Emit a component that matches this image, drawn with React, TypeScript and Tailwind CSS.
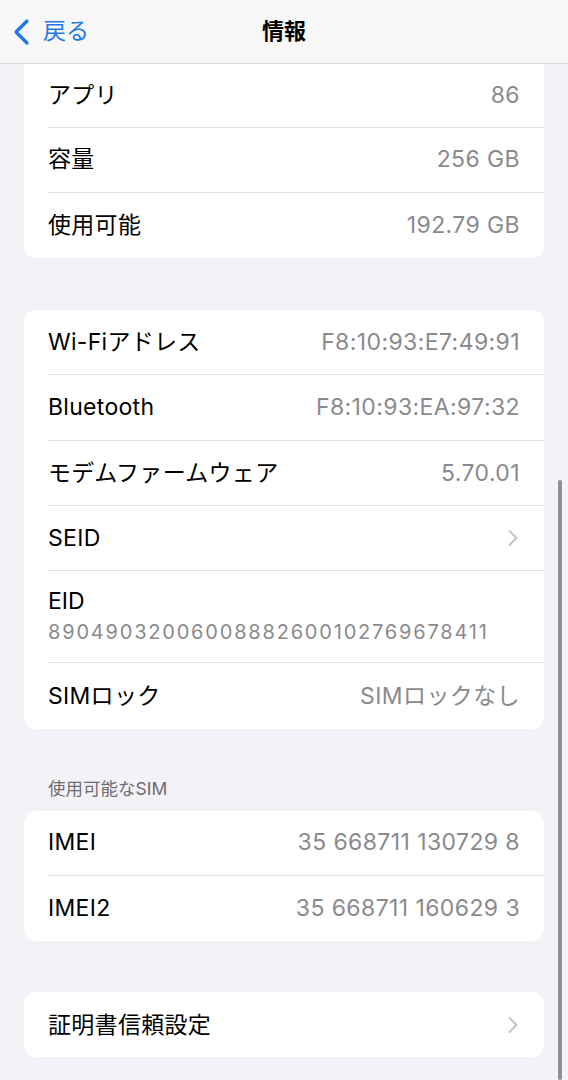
import { ChevronRight } from "lucide-react";

type Item = {
  label: string;
  value?: string;
  chevron?: boolean;
  sub?: string;
};

const font = { fontFamily: '"Inter", "Noto Sans CJK JP", sans-serif' };

const Row = ({ item, last, first }: { item: Item; last?: boolean; first?: boolean }) => {
  if (item.sub) {
    return (
      <div className="pl-6">
        <div className={`flex h-[92px] flex-col justify-center pr-6 ${last ? "" : "border-b border-[#e2e2e5]"}`}>
          <span className="text-[23px] leading-[31px] text-black">{item.label}</span>
          <span className="text-[20px] leading-[30px] tracking-[1.8px] text-[#8a8a8e]">{item.sub}</span>
        </div>
      </div>
    );
  }
  return (
    <div className="pl-6">
      <div
        className={`flex items-center justify-between pr-6 ${first ? "h-[63.5px]" : "h-[65.3px]"} ${
          last ? "" : "border-b border-[#e2e2e5]"
        }`}
      >
        <span className="text-[23px] tracking-[0.3px] text-black">{item.label}</span>
        {item.value && <span className="text-[23px] tracking-[0.4px] text-[#8a8a8e]">{item.value}</span>}
        {item.chevron && <ChevronRight className="mr-[-7px] h-[28px] w-[28px] text-[#c4c4c7]" strokeWidth={1.7} />}
      </div>
    </div>
  );
};

const Card = ({ items, topCut }: { items: Item[]; topCut?: boolean }) => (
  <div className={`mx-6 bg-white ${topCut ? "rounded-b-xl" : "rounded-xl"}`}>
    {items.map((it, i) => (
      <Row key={it.label} item={it} first={topCut && i === 0} last={i === items.length - 1} />
    ))}
  </div>
);

export default function App() {
  const storage: Item[] = [
    { label: "アプリ", value: "86" },
    { label: "容量", value: "256 GB" },
    { label: "使用可能", value: "192.79 GB" },
  ];
  const network: Item[] = [
    { label: "Wi-Fiアドレス", value: "F8:10:93:E7:49:91" },
    { label: "Bluetooth", value: "F8:10:93:EA:97:32" },
    { label: "モデムファームウェア", value: "5.70.01" },
    { label: "SEID", chevron: true },
    { label: "EID", sub: "89049032006008882600102769678411" },
    { label: "SIMロック", value: "SIMロックなし" },
  ];
  const sim: Item[] = [
    { label: "IMEI", value: "35 668711 130729 8" },
    { label: "IMEI2", value: "35 668711 160629 3" },
  ];

  return (
    <div className="relative h-[1080px] w-[568px] overflow-hidden bg-[#f2f2f7]" style={font}>
      {/* Header */}
      <div className="relative flex h-16 items-center border-b border-[#dcdcdc] bg-[#f7f7f7]">
        <div className="flex items-center pl-[10px]">
          <svg width="24" height="28" viewBox="0 0 24 28" fill="none">
            <path d="M17 3 L6 14 L17 25" stroke="#1f7ae8" strokeWidth="3.2" strokeLinecap="round" strokeLinejoin="round" />
          </svg>
          <span className="ml-[9px] text-[23px] text-[#1f7ae8]">戻る</span>
        </div>
        <span className="absolute left-1/2 -translate-x-1/2 text-[22px] font-bold text-black">情報</span>
      </div>

      <Card items={storage} topCut />
      <div className="h-[52px]" />
      <Card items={network} />

      <div className="px-12 pb-[12px] pt-[50px] text-[17.5px] leading-[20px] text-[#6d6d72]">使用可能なSIM</div>
      <Card items={sim} />
      <div className="h-[51px]" />
      <Card items={[{ label: "証明書信頼設定", chevron: true }]} />

      {/* scroll indicator */}
      <div className="absolute bottom-0 right-[6px] top-[480px] w-[4px] rounded-full bg-[#8e8e93]" />
    </div>
  );
}
